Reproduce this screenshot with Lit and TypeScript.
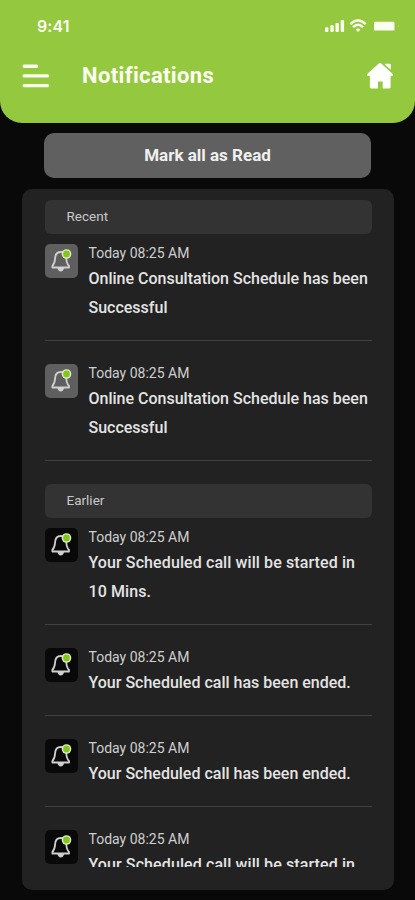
import { LitElement, html, css } from "lit";
import { customElement, property } from "lit/decorators.js";

interface Notice {
  time: string;
  text: string;
  fresh?: boolean;
  wide?: boolean;
}

const RECENT: Notice[] = [
  { time: "Today 08:25 AM", text: "Online Consultation Schedule has been\nSuccessful", fresh: true },
  { time: "Today 08:25 AM", text: "Online Consultation Schedule has been\nSuccessful", fresh: true },
];

const EARLIER: Notice[] = [
  { time: "Today 08:25 AM", text: "Your Scheduled call will be started in\n10 Mins.", wide: true },
  { time: "Today 08:25 AM", text: "Your Scheduled call has been ended." },
  { time: "Today 08:25 AM", text: "Your Scheduled call has been ended." },
  { time: "Today 08:25 AM", text: "Your Scheduled call will be started in\n10 Mins.", wide: true },
];

@customElement("notice-item")
class NoticeItem extends LitElement {
  @property({ attribute: false }) notice!: Notice;

  static styles = css`
    :host { display: block; }
    .item {
      display: flex;
      gap: 11px;
      padding-bottom: 17.1px;
      border-bottom: 1px solid #404040;
      margin-bottom: 22.5px;
    }
    .badge { width: 33px; height: 34px; flex: none; border-radius: 5px; background: #090909; }
    .badge.fresh { background: #5f5f5f; }
    .badge svg { display: block; }
    .time { height: 21.4px; line-height: 19px; font-size: 14px; color: #cfcfcf; white-space: nowrap; }
    .text { line-height: 28.9px; font-size: 16px; font-weight: 500; color: #e4e4e4; white-space: pre; }
    .wide { letter-spacing: 0.1px; }
  `;

  render() {
    const n = this.notice;
    return html`<div class="item">
      <div class="badge ${n.fresh ? "fresh" : ""}">
        <svg width="33" height="34" viewBox="0 0 33 34" fill="none">
          <path d="M7.4 22C9.6 19.8 9.9 18 10.1 14.3C10.3 10.3 12.4 8 15.8 8C19.3 8 21.1 10.5 21.3 14.3C21.5 18 21.7 19.8 24 22V23.5H7.4Z" stroke="#d0d0d0" stroke-width="1.8" stroke-linejoin="round"/>
          <path d="M12.4 24H19.1C18.6 26.3 17.6 27.4 15.8 27.4S12.9 26.3 12.4 24Z" fill="#d0d0d0"/>
          <circle cx="21.5" cy="10" r="4.8" fill="#e1eec9"/>
          <circle cx="21.5" cy="10" r="3.4" fill="#83c51c"/>
        </svg>
      </div>
      <div>
        <div class="time">${n.time}</div>
        <div class="text ${n.wide ? "wide" : ""}">${n.text}</div>
      </div>
    </div>`;
  }
}

@customElement("app-root")
class AppRoot extends LitElement {
  static styles = css`
    :host {
      display: flex;
      flex-direction: column;
      height: 900px;
      overflow: hidden;
      background: #090909;
      font-family: Roboto, "Noto Sans", sans-serif;
    }
    * { box-sizing: border-box; }
    .header { flex: none; height: 123px; background: #94c93f; border-radius: 0 0 22px 22px; color: #fbfff0; }
    .status { display: flex; align-items: center; justify-content: space-between; height: 52px; padding: 0 15px 0 37px; }
    .clock { font-family: Inter, sans-serif; font-size: 16px; font-weight: 600; letter-spacing: 0.1px; }
    .bar { display: flex; align-items: center; height: 47px; padding: 0 21px 0 22px; }
    .title { flex: 1; margin: 0 0 0 32px; font-size: 22px; font-weight: 700; line-height: 30px; letter-spacing: 0.36px; }
    svg { display: block; }
    .mark {
      flex: none;
      width: 327px;
      height: 45px;
      margin: 10px 0 0 44px;
      border: 0;
      border-radius: 10px;
      background: #606060;
      color: #f0f0f0;
      font: 700 17px/45px Roboto, sans-serif;
      text-align: center;
      padding: 0;
    }
    .panel { flex: none; width: 372px; height: 700.5px; margin: 11px 0 0 22px; padding: 10.5px 22.5px 22px; border-radius: 10px; background: #222; }
    .list { height: 667.5px; overflow: hidden; }
    .section { height: 34px; margin-bottom: 10.5px; padding-left: 22px; border-radius: 6px; background: #333; color: #c8c8c8; font-size: 13.5px; line-height: 33px; }
  `;

  render() {
    return html`
      <header class="header">
        <div class="status">
          <span class="clock">9:41</span>
          <svg width="80" height="16" viewBox="0 0 80 16" fill="#fbfff0">
            <rect x="5" y="9.3" width="3.4" height="4.7" rx="1"/>
            <rect x="10.3" y="7.3" width="3.4" height="6.7" rx="1"/>
            <rect x="15.5" y="5" width="3.4" height="9" rx="1"/>
            <rect x="20.7" y="2" width="3.4" height="12" rx="1"/>
            <g fill="none" stroke="#fbfff0" stroke-width="2.4">
              <path d="M30.3 6.1Q38 -1 45.7 6.1"/>
              <path d="M33 9.2Q38 4.4 43 9.2"/>
            </g>
            <path d="M35.6 11.4Q38 9.5 40.4 11.4L38 14Z"/>
            <rect x="54" y="3.8" width="20.5" height="8.8" rx="1.2"/>
            <path d="M78 6.8Q79.6 8.2 78 9.6Z" opacity=".45"/>
          </svg>
        </div>
        <div class="bar">
          <svg width="28" height="26" viewBox="0 0 28 26" stroke="#fbfff0" stroke-width="3.4" stroke-linecap="round">
            <path d="M2.2 3.2H14.6M2.2 12.9H25.6M2.2 22.6H25.6"/>
          </svg>
          <h1 class="title">Notifications</h1>
          <svg width="28" height="27" viewBox="0 0 28 27" fill="#fff">
            <path d="M12.8 1.5Q14 .5 15.2 1.5L27 12.3Q27.6 13.6 26 14H24.6V25Q24.6 26.4 23.3 26.4H16.7V19.4H12V26.4H5.2Q3.9 26.4 3.9 25V14H2Q.4 13.6 1 12.3Z"/>
            <path d="M18.6 2.2Q19 1.7 20 1.7H23.5Q24.8 1.7 24.8 3V7.8Z"/>
          </svg>
        </div>
      </header>
      <button class="mark">Mark all as Read</button>
      <main class="panel">
        <div class="list">
          <div class="section">Recent</div>
          ${RECENT.map((n) => html`<notice-item .notice=${n}></notice-item>`)}
          <div class="section">Earlier</div>
          ${EARLIER.map((n) => html`<notice-item .notice=${n}></notice-item>`)}
        </div>
      </main>
    `;
  }
}
